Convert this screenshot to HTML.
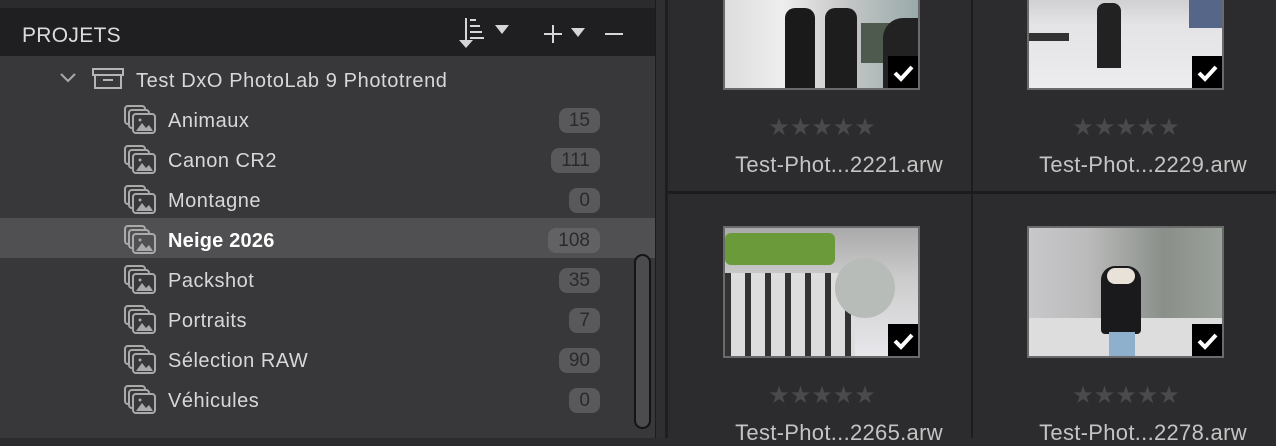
<!DOCTYPE html>
<html><head><meta charset="utf-8"><style>
*{margin:0;padding:0;box-sizing:border-box}
body{width:1276px;height:438px;overflow:hidden;background:#2c2c2e;font-family:"Liberation Sans",sans-serif;position:relative}
.a{position:absolute}
.row{position:absolute;left:0;width:655px;height:40px}
.row .t{position:absolute;left:168px;top:10px;font-size:20px;letter-spacing:.5px;color:#d8d8d8}
.row .b{position:absolute;right:55px;top:8px;height:25px;border-radius:8px;background:#59595b;color:#2a2a2a;font-size:19px;line-height:25px;text-align:center;padding:0 10px}
.row svg{position:absolute;left:123px;top:4px}
.ph{position:absolute;border:2px solid #6a6a6c;overflow:hidden}
.ck{position:absolute;right:0;bottom:0;width:30px;height:32px;background:#000}
.st{position:absolute;color:#4a4a4c;font-size:24px;width:200px;text-align:center}
.nm{position:absolute;color:#c4c4c4;font-size:22px;letter-spacing:.3px;width:300px;text-align:center}
</style></head><body>
<div class="a" style="left:0;top:0;width:655px;height:8px;background:#2b2b2d"></div>
<div class="a" style="left:0;top:8px;width:655px;height:48px;background:#1f1f21"></div>
<div class="a" style="left:0;top:56px;width:655px;height:382px;background:#38383a"></div>
<div class="a" style="left:22px;top:24px;font-size:21px;color:#dcdcdc;letter-spacing:.3px">PROJETS</div>
<svg class="a" style="left:455px;top:14px" width="170" height="36" viewBox="0 0 170 36">
<g stroke="#d6d6d6" stroke-width="2" fill="none"><path d="M11 4V28"/><path d="M15 6h6M15 12h10M15 18h12M15 24h14"/><path d="M89 20h18M98 11v18"/><path d="M150 20h18"/></g>
<path d="M4 26l7 8 7-8z" fill="#d6d6d6"/><path d="M40 11h14l-7 9z" fill="#d6d6d6"/><path d="M116 14h14l-7 9z" fill="#d6d6d6"/>
</svg>
<svg class="a" style="left:58px;top:68px" width="72" height="26" viewBox="0 0 72 26">
<path d="M3 6l7 7 7-7" stroke="#aaa" stroke-width="2" fill="none"/>
<g stroke="#b5b5b5" stroke-width="2" fill="none"><rect x="35" y="1" width="30" height="6"/><rect x="37" y="7" width="26" height="13"/><path d="M45 12h10"/></g>
</svg>
<div class="a" style="left:136px;top:70px;font-size:20px;letter-spacing:.6px;color:#d8d8d8">Test DxO PhotoLab 9 Phototrend</div>
<div class="a" style="left:0;top:218px;width:655px;height:40px;background:#505052"></div>
<div class="a" style="left:634px;top:254px;width:17px;height:175px;border:2px solid #141414;border-radius:9px;background:#4c4c4e"></div>

<div class="row" style="top:100px"><svg width="36" height="32" viewBox="0 0 36 32"><g stroke="#aaa" stroke-width="2" fill="none"><rect x="2" y="2" width="20" height="18" rx="3"/><rect x="6" y="6" width="20" height="18" rx="3" fill="#38383a"/><rect x="10" y="10" width="22" height="19" rx="3" fill="#38383a"/></g><path d="M13 27l6-8 4 5 3-3 4 6z" fill="#aaa"/><circle cx="17" cy="16" r="1.5" fill="#aaa"/></svg><span class="t">Animaux</span><span class="b">15</span></div>
<div class="row" style="top:140px"><svg width="36" height="32" viewBox="0 0 36 32"><g stroke="#aaa" stroke-width="2" fill="none"><rect x="2" y="2" width="20" height="18" rx="3"/><rect x="6" y="6" width="20" height="18" rx="3" fill="#38383a"/><rect x="10" y="10" width="22" height="19" rx="3" fill="#38383a"/></g><path d="M13 27l6-8 4 5 3-3 4 6z" fill="#aaa"/><circle cx="17" cy="16" r="1.5" fill="#aaa"/></svg><span class="t">Canon CR2</span><span class="b">111</span></div>
<div class="row" style="top:180px"><svg width="36" height="32" viewBox="0 0 36 32"><g stroke="#aaa" stroke-width="2" fill="none"><rect x="2" y="2" width="20" height="18" rx="3"/><rect x="6" y="6" width="20" height="18" rx="3" fill="#38383a"/><rect x="10" y="10" width="22" height="19" rx="3" fill="#38383a"/></g><path d="M13 27l6-8 4 5 3-3 4 6z" fill="#aaa"/><circle cx="17" cy="16" r="1.5" fill="#aaa"/></svg><span class="t">Montagne</span><span class="b">0</span></div>
<div class="row" style="top:220px"><svg width="36" height="32" viewBox="0 0 36 32"><g stroke="#aaa" stroke-width="2" fill="none"><rect x="2" y="2" width="20" height="18" rx="3"/><rect x="6" y="6" width="20" height="18" rx="3" fill="#505052"/><rect x="10" y="10" width="22" height="19" rx="3" fill="#505052"/></g><path d="M13 27l6-8 4 5 3-3 4 6z" fill="#aaa"/><circle cx="17" cy="16" r="1.5" fill="#aaa"/></svg><span class="t" style="color:#fff;font-weight:bold;letter-spacing:.2px">Neige 2026</span><span class="b" style="background:#626264">108</span></div>
<div class="row" style="top:260px"><svg width="36" height="32" viewBox="0 0 36 32"><g stroke="#aaa" stroke-width="2" fill="none"><rect x="2" y="2" width="20" height="18" rx="3"/><rect x="6" y="6" width="20" height="18" rx="3" fill="#38383a"/><rect x="10" y="10" width="22" height="19" rx="3" fill="#38383a"/></g><path d="M13 27l6-8 4 5 3-3 4 6z" fill="#aaa"/><circle cx="17" cy="16" r="1.5" fill="#aaa"/></svg><span class="t">Packshot</span><span class="b">35</span></div>
<div class="row" style="top:300px"><svg width="36" height="32" viewBox="0 0 36 32"><g stroke="#aaa" stroke-width="2" fill="none"><rect x="2" y="2" width="20" height="18" rx="3"/><rect x="6" y="6" width="20" height="18" rx="3" fill="#38383a"/><rect x="10" y="10" width="22" height="19" rx="3" fill="#38383a"/></g><path d="M13 27l6-8 4 5 3-3 4 6z" fill="#aaa"/><circle cx="17" cy="16" r="1.5" fill="#aaa"/></svg><span class="t">Portraits</span><span class="b">7</span></div>
<div class="row" style="top:340px"><svg width="36" height="32" viewBox="0 0 36 32"><g stroke="#aaa" stroke-width="2" fill="none"><rect x="2" y="2" width="20" height="18" rx="3"/><rect x="6" y="6" width="20" height="18" rx="3" fill="#38383a"/><rect x="10" y="10" width="22" height="19" rx="3" fill="#38383a"/></g><path d="M13 27l6-8 4 5 3-3 4 6z" fill="#aaa"/><circle cx="17" cy="16" r="1.5" fill="#aaa"/></svg><span class="t">Sélection RAW</span><span class="b">90</span></div>
<div class="row" style="top:380px"><svg width="36" height="32" viewBox="0 0 36 32"><g stroke="#aaa" stroke-width="2" fill="none"><rect x="2" y="2" width="20" height="18" rx="3"/><rect x="6" y="6" width="20" height="18" rx="3" fill="#38383a"/><rect x="10" y="10" width="22" height="19" rx="3" fill="#38383a"/></g><path d="M13 27l6-8 4 5 3-3 4 6z" fill="#aaa"/><circle cx="17" cy="16" r="1.5" fill="#aaa"/></svg><span class="t">Véhicules</span><span class="b">0</span></div>

<div class="a" style="left:655px;top:0;width:13px;height:438px;background:#2f2f31;border-left:1px solid #1c1c1e"></div>
<div class="a" style="left:665px;top:0;width:3px;height:438px;background:#1e1e20"></div>
<div class="a" style="left:971px;top:0;width:2px;height:438px;background:#1c1c1e"></div>
<div class="a" style="left:668px;top:191px;width:608px;height:3px;background:#1c1c1e"></div>

<div class="ph" style="left:723px;top:-4px;width:197px;height:94px;background:linear-gradient(90deg,#ddd 0,#eee 30%,#c9c9c9 60%,#9aa 100%)">
<div class="a" style="left:60px;top:10px;width:30px;height:80px;background:#1a1a1a;border-radius:10px 10px 0 0"></div>
<div class="a" style="left:100px;top:10px;width:32px;height:80px;background:#1d1d1d;border-radius:10px 10px 0 0"></div>
<div class="a" style="left:136px;top:25px;width:60px;height:40px;background:#4d5a4d"></div>
<div class="a" style="left:158px;top:20px;width:40px;height:70px;background:#222;border-radius:20px 0 0 0"></div>
<div class="ck"><svg width="30" height="32"><path d="M7 17l6 6 11-12" stroke="#fff" stroke-width="4" fill="none"/></svg></div></div>

<div class="ph" style="left:1027px;top:-4px;width:197px;height:94px;background:linear-gradient(180deg,#cfcfd2 0,#e4e4e6 30%,#ececee 100%)">
<div class="a" style="left:68px;top:5px;width:24px;height:65px;background:#222;border-radius:8px 8px 0 0"></div>
<div class="a" style="left:0;top:35px;width:40px;height:8px;background:#333"></div>
<div class="a" style="left:160px;top:0;width:35px;height:30px;background:#568"></div>
<div class="ck"><svg width="30" height="32"><path d="M7 17l6 6 11-12" stroke="#fff" stroke-width="4" fill="none"/></svg></div></div>

<div class="ph" style="left:723px;top:226px;width:197px;height:132px;background:linear-gradient(180deg,#aaa 0,#ccc 40%,#e8e8ec 100%)">
<div class="a" style="left:0;top:5px;width:110px;height:32px;background:#6b9a3a;border-radius:6px"></div>
<div class="a" style="left:0;top:45px;width:130px;height:85px;background:repeating-linear-gradient(90deg,#333 0,#333 6px,#ddd 6px,#ddd 20px)"></div>
<div class="a" style="left:110px;top:30px;width:60px;height:60px;background:#b8bcb8;border-radius:30px"></div>
<div class="ck"><svg width="30" height="32"><path d="M7 17l6 6 11-12" stroke="#fff" stroke-width="4" fill="none"/></svg></div></div>

<div class="ph" style="left:1027px;top:226px;width:197px;height:132px;background:linear-gradient(90deg,#c8c8cc 0,#bbb 30%,#8a8f8a 70%,#9aa09a 100%)">
<div class="a" style="left:0;top:90px;width:197px;height:42px;background:#ddd"></div>
<div class="a" style="left:72px;top:38px;width:40px;height:68px;background:#1a1a1c;border-radius:14px 14px 4px 4px"></div>
<div class="a" style="left:80px;top:104px;width:26px;height:28px;background:#8fb0cc"></div>
<div class="a" style="left:78px;top:40px;width:28px;height:16px;background:#e8e2d8;border-radius:10px"></div>
<div class="ck"><svg width="30" height="32"><path d="M7 17l6 6 11-12" stroke="#fff" stroke-width="4" fill="none"/></svg></div></div>

<div class="st" style="left:722px;top:113px">★★★★★</div>
<div class="st" style="left:1026px;top:113px">★★★★★</div>
<div class="st" style="left:722px;top:381px">★★★★★</div>
<div class="st" style="left:1026px;top:381px">★★★★★</div>
<div class="nm" style="left:689px;top:152px">Test-Phot...2221.arw</div>
<div class="nm" style="left:993px;top:152px">Test-Phot...2229.arw</div>
<div class="nm" style="left:689px;top:420px">Test-Phot...2265.arw</div>
<div class="nm" style="left:993px;top:420px">Test-Phot...2278.arw</div>
</body></html>
